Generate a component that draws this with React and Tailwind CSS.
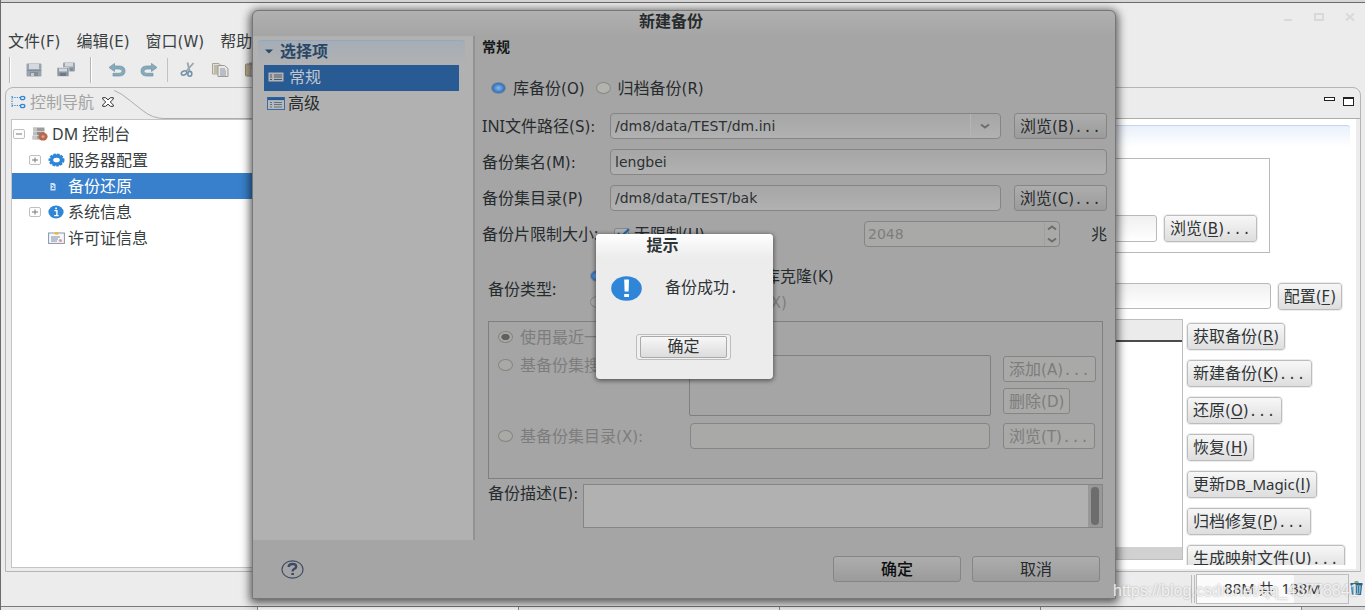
import React from "react";

const FONT = "font-['Noto_Sans','Noto_Sans_CJK_SC',sans-serif]";

function Dots() {
  return <span className="font-['Liberation_Mono',monospace] text-[15px] leading-none">...</span>;
}

function Key({ k, mark, tail }) {
  return (
    <span className="font-['DejaVu_Sans',sans-serif] text-[15px] leading-none">
      ({mark ? <u className="underline underline-offset-2">{k}</u> : k}){tail}
    </span>
  );
}

/* ---------- icons ---------- */

function SaveIcon() {
  return (
    <svg width="16" height="14" viewBox="0 0 16 14">
      <rect x="0.5" y="0.5" width="15" height="13" rx="1" fill="#9aa4ae" />
      <rect x="3" y="1" width="10" height="5" fill="#d3d9de" />
      <rect x="1" y="7" width="14" height="1" fill="#7f8b96" />
      <rect x="4" y="9" width="8" height="4" fill="#848e98" />
      <rect x="5" y="10" width="3" height="3" fill="#c6ccd2" />
    </svg>
  );
}

function SaveAllIcon() {
  return (
    <svg width="18" height="15" viewBox="0 0 18 15">
      <rect x="6" y="0.5" width="12" height="9" rx="1" fill="#9aa4ae" />
      <rect x="8" y="1" width="8" height="3.5" fill="#d3d9de" />
      <rect x="10" y="6" width="6" height="3" fill="#848e98" />
      <rect x="0" y="5.5" width="12" height="9" rx="1" fill="#8b97a2" stroke="#ececec" strokeWidth="0.6" />
      <rect x="2" y="6.5" width="8" height="3" fill="#d3d9de" />
      <rect x="3" y="11" width="6" height="3" fill="#6f7a85" />
    </svg>
  );
}

function UndoIcon({ flip }) {
  return (
    <svg width="18" height="14" viewBox="0 0 18 14" className={flip ? "-scale-x-100" : ""}>
      <path d="M6.5 0.5 L1 4.5 L6.5 8.5 V6 H11 Q14 6 14 8.2 Q14 10.3 11 10.3 H5 V13 H11.5 Q17 12.8 17 8 Q17 3.2 11.5 3 H6.5 Z" fill="#87aabb" stroke="#6b93a8" strokeWidth="0.7" />
    </svg>
  );
}

function CutIcon() {
  return (
    <svg width="16" height="15" viewBox="0 0 16 15" fill="none">
      <path d="M13.5 1 L6 9.5 M7.5 0.5 L9.5 9" stroke="#9aa6af" strokeWidth="1.8" />
      <ellipse cx="4" cy="11" rx="2.8" ry="2" stroke="#7593a8" strokeWidth="1.6" transform="rotate(-25 4 11)" />
      <ellipse cx="9.8" cy="11.8" rx="2" ry="2.4" stroke="#7593a8" strokeWidth="1.6" />
    </svg>
  );
}

function CopyIcon() {
  return (
    <svg width="17" height="14" viewBox="0 0 17 14">
      <path d="M0.5 0.5 H7 L9 2.5 V11 H0.5 Z" fill="#e2dfd2" stroke="#a8a48f" />
      <path d="M2 3 H6 M2 5 H6 M2 7 H6 M2 9 H6" stroke="#9a9788" />
      <path d="M6 2.5 H12.5 L16 5.5 V13.5 H6 Z" fill="#e6e8ea" stroke="#9b9b8e" />
      <path d="M8 6 H13 M8 8 H14 M8 10 H14 M8 12 H14" stroke="#8b94a2" />
    </svg>
  );
}

function PasteIcon() {
  return (
    <svg width="16" height="15" viewBox="0 0 16 15">
      <rect x="0.5" y="2" width="13" height="12" rx="1" fill="#b9ab90" stroke="#938770" />
      <rect x="4" y="0.5" width="6" height="3" fill="#8d99a5" />
      <rect x="6" y="6" width="9" height="8" fill="#eceef0" stroke="#8b94a2" />
    </svg>
  );
}

function NavIcon() {
  return (
    <svg width="15" height="14" viewBox="0 0 15 14" fill="none">
      <path d="M1 1 V12 M1 2.5 H9 M1 10.5 H9" stroke="#2f86d6" strokeWidth="1.2" strokeDasharray="1.2 1.2" />
      <ellipse cx="11.6" cy="3" rx="2.2" ry="1.7" stroke="#2f86d6" strokeWidth="1.3" />
      <ellipse cx="11.6" cy="11" rx="2.2" ry="1.7" stroke="#2f86d6" strokeWidth="1.3" />
    </svg>
  );
}

function CloseTabIcon() {
  return (
    <svg width="12" height="10" viewBox="0 0 12 10" fill="#fff" stroke="#333" strokeWidth="1">
      <path d="M0.7 0.7 H3.5 L6 2.8 L8.5 0.7 H11.3 V2 L8.3 5 L11.3 8 V9.3 H8.5 L6 7.2 L3.5 9.3 H0.7 V8 L3.7 5 L0.7 2 Z" />
    </svg>
  );
}

function Expander({ open }) {
  return (
    <svg width="12" height="10" viewBox="0 0 12 10" fill="none">
      <rect x="0.5" y="0.5" width="11" height="9" rx="1.5" fill="#fdfdfd" stroke="#bfbfbf" />
      <path d={open ? "M3 5 H9" : "M3 5 H9 M6 2.5 V7.5"} stroke="#777" />
    </svg>
  );
}

function ServerIcon() {
  return (
    <svg width="16" height="14" viewBox="0 0 16 14">
      <path d="M1 0.5 H12.5 V4 H1 Z" fill="#9d9d9d" />
      <path d="M1 4.6 H12.5 V8 H1 Z" fill="#8b8b8b" />
      <path d="M0.5 8.6 H12 V12.5 H0.5 Z" fill="#a5a5a5" />
      <path d="M1 0.5 H5 V12.5 H1 Z" fill="#d4d4d4" opacity="0.7" />
      <ellipse cx="11" cy="9.6" rx="4.6" ry="4" fill="#b9674d" />
      <ellipse cx="11" cy="9.6" rx="1.6" ry="1.3" fill="#dca28f" />
    </svg>
  );
}

function GearIcon() {
  return (
    <svg width="17" height="14" viewBox="0 0 17 14" fill="none">
      <ellipse cx="8.5" cy="7" rx="7.1" ry="5.7" stroke="#2f86d6" strokeWidth="1.8" strokeDasharray="2.6 1.2" />
      <ellipse cx="8.5" cy="7" rx="5" ry="4" stroke="#2f86d6" strokeWidth="3.4" />
    </svg>
  );
}

function BackupIcon() {
  return (
    <svg width="16" height="12" viewBox="0 0 16 12" fill="none">
      <path d="M9 1 Q14 2 14 6 Q14 9 11 11" stroke="#2b7fd3" strokeWidth="1.2" />
      <path d="M2.5 3 H6 L7.5 4.5 V10.5 H2.5 Z" fill="#cfe3f7" />
      <path d="M3.5 5 L6 6.5 L4 8.5 H6.5" stroke="#2f78c4" strokeWidth="1" />
    </svg>
  );
}

function InfoIcon() {
  return (
    <svg width="16" height="14" viewBox="0 0 16 14">
      <ellipse cx="8" cy="7" rx="7.6" ry="6.4" fill="#2f86d6" />
      <path d="M6.4 5.6 H8.9 V10.5 M6.2 10.6 H10.6" stroke="#fff" strokeWidth="1.4" fill="none" />
      <rect x="7.2" y="2.6" width="1.8" height="1.6" fill="#fff" />
    </svg>
  );
}

function LicenseIcon() {
  return (
    <svg width="17" height="12" viewBox="0 0 17 12">
      <rect x="0.6" y="1" width="15.8" height="10.4" fill="#f6f8fb" stroke="#8794a8" />
      <path d="M3 5 H12 M3 7 H10 M3 9 H9" stroke="#7d8aa5" />
      <rect x="7" y="0" width="3.4" height="2.6" fill="#f2b632" />
      <ellipse cx="12.4" cy="8.6" rx="1.8" ry="1.5" fill="#e39aa0" />
    </svg>
  );
}

function PageIcon({ selected }) {
  return selected ? (
    <svg width="16" height="10" viewBox="0 0 16 10">
      <rect x="0.5" y="0.5" width="15" height="9" fill="#b3b3b3" />
      <path d="M2 3 H4 M2 5 H4 M2 7.5 H4 M6 3 H14 M6 5 H14 M6 7.5 H14" stroke="#4c5a68" />
    </svg>
  ) : (
    <svg width="18" height="13" viewBox="0 0 18 13">
      <rect x="0.5" y="0.5" width="17" height="12" fill="#b4b9be" stroke="#3d6c9e" />
      <rect x="1" y="0.5" width="16" height="2.6" fill="#21599a" />
      <path d="M3 5.5 H5 M3 7.5 H5 M3 10 H5 M7 5.5 H15 M7 7.5 H15 M7 10 H15" stroke="#65707c" />
    </svg>
  );
}

function Chevron({ up }) {
  return (
    <svg width="10" height="6" viewBox="0 0 10 6" fill="none" stroke="#6c6e6d" strokeWidth="2">
      <path d={up ? "M1 4.5 L5 1.5 L9 4.5" : "M1 1.5 L5 4.5 L9 1.5"} />
    </svg>
  );
}

function HelpIcon() {
  return (
    <svg width="23" height="19" viewBox="0 0 23 19" fill="none" stroke="#3d4a61">
      <ellipse cx="11.5" cy="9.5" rx="10.5" ry="8.6" strokeWidth="1.1" />
      <path d="M7.6 7 Q7.8 4 11.5 4 Q15.2 4 15.2 6.6 Q15.2 8.3 12.8 9.2 Q11.6 9.7 11.6 11.4" strokeWidth="2.3" />
      <path d="M10.3 14 H13" strokeWidth="2" />
    </svg>
  );
}

function TrashIcon() {
  return (
    <svg width="13" height="14" viewBox="0 0 13 14" fill="none">
      <path d="M1.5 4 H11.5 L10.5 13.3 H2.5 Z" fill="#8fc0cf" stroke="#2d6d9c" strokeWidth="1.2" />
      <path d="M4.4 5 V12 M6.5 5 V12 M8.6 5 V12" stroke="#2d6d9c" />
      <path d="M0.5 3 H12.5" stroke="#2d5f86" strokeWidth="2" />
      <path d="M4.5 1.5 Q6.5 0 8.5 1.5" stroke="#5a9c62" strokeWidth="1.4" />
    </svg>
  );
}

/* ---------- main window ---------- */

function TreeRow({ pad, expander, icon, label, selected }) {
  return (
    <li className={"flex h-[26px] items-center " + pad + (selected ? " bg-[#3880cc] text-white" : " text-[#3a3f42]")}>
      <span className="flex w-[12px] shrink-0 justify-center">{expander}</span>
      <span className="ml-[6px] flex w-[18px] shrink-0 justify-center">{icon}</span>
      <span className="ml-[3px] whitespace-nowrap">{label}</span>
    </li>
  );
}

function LightButton({ children }) {
  return (
    <button className="h-[27px] shrink-0 rounded-[3px] border border-[#bdbdbd] bg-gradient-to-b from-[#f7f7f7] to-[#dedede] px-[5px] leading-[23px] whitespace-nowrap text-[#2f3436] outline-1 outline-[#ececec]">
      {children}
    </button>
  );
}

const ACTIONS = [
  { t: "获取备份", k: "R" },
  { t: "新建备份", k: "K", more: true },
  { t: "还原", k: "O", more: true },
  { t: "恢复", k: "H" },
  { t: "更新", latin: "DB_Magic", k: "I" },
  { t: "归档修复", k: "P", more: true },
  { t: "生成映射文件", k: "U", more: true },
];

function Sep() {
  return <span className="h-[26px] w-[2px] shrink-0 border-r border-white bg-[#b5b5b5]" />;
}

function MainWindow() {
  return (
    <div className="flex min-h-screen flex-col border-l border-[#6b6b6b] bg-[#ececec]">
      <div className="h-[3px] border-b border-[#6b6b6b] bg-[#d6d6d6]" />
      <header className="flex h-[27px] items-center justify-end gap-[21px] pr-[10px] text-[#d9d9d9]">
        <button aria-label="最小化" className="flex h-[9px] w-[9px] items-end"><span className="h-[2px] w-[8px] bg-current" /></button>
        <button aria-label="最大化" className="h-[8px] w-[10px] border-2 border-current" />
        <button aria-label="关闭">
          <svg width="10" height="8" viewBox="0 0 10 8" stroke="currentColor" strokeWidth="2"><path d="M1 0.5 L9 7.5 M9 0.5 L1 7.5" /></svg>
        </button>
      </header>
      <nav className="flex h-[22px] items-center gap-[16px] pl-[7px] whitespace-nowrap text-[#3a3f42]">
        <a href="#file">文件<Key k="F" /></a>
        <a href="#edit">编辑<Key k="E" /></a>
        <a href="#window">窗口<Key k="W" /></a>
        <a href="#help">帮助<Key k="H" /></a>
      </nav>
      <div className="flex h-[35px] items-center pl-[8px]">
        <Sep />
        <div className="flex items-center gap-[15px] px-[15px]">
          <button aria-label="保存"><SaveIcon /></button>
          <button aria-label="全部保存"><SaveAllIcon /></button>
        </div>
        <Sep />
        <div className="flex items-center gap-[14px] pr-[9px] pl-[16px]">
          <button aria-label="撤销"><UndoIcon /></button>
          <button aria-label="重做"><UndoIcon flip /></button>
        </div>
        <span className="h-[24px] w-px bg-[#c2c2c2]" />
        <div className="flex items-center gap-[16px] pl-[12px]">
          <button aria-label="剪切"><CutIcon /></button>
          <button aria-label="复制"><CopyIcon /></button>
          <button aria-label="粘贴"><PasteIcon /></button>
        </div>
      </div>

      <main className="flex min-h-[485px] flex-1 gap-[6px] pr-[4px] pl-[4px]">
        <aside className="flex w-[340px] shrink-0 flex-col rounded-tl-[8px] border border-[#b5b5b5]">
          <div className="flex h-[31px] items-start">
            <div className="flex h-[28px] items-center gap-[4px] pl-[5px] text-[#a3a3a3]">
              <NavIcon />
              <span className="text-[16px]">控制导航</span>
              <button aria-label="关闭标签" className="ml-[4px]"><CloseTabIcon /></button>
            </div>
            <svg className="h-[31px] flex-1" viewBox="0 0 230 31" preserveAspectRatio="xMinYMin slice" fill="none">
              <path d="M-12 0.5 Q2 0.5 14 11 L28 22 Q38 30.5 50 30.5 H240" stroke="#adadad" />
            </svg>
          </div>
          <ul className="mx-[5px] mb-[3px] flex-1 border border-[#c4c4c4] bg-white pt-[1px]">
            <TreeRow pad="pl-[1px]" expander={<Expander open />} icon={<ServerIcon />} label="DM 控制台" />
            <TreeRow pad="pl-[17px]" expander={<Expander />} icon={<GearIcon />} label="服务器配置" />
            <TreeRow pad="pl-[17px]" icon={<BackupIcon />} label="备份还原" selected />
            <TreeRow pad="pl-[17px]" expander={<Expander />} icon={<InfoIcon />} label="系统信息" />
            <TreeRow pad="pl-[17px]" icon={<LicenseIcon />} label="许可证信息" />
          </ul>
        </aside>

        <section className="flex min-w-0 flex-1 flex-col rounded-t-[8px] border border-[#b5b5b5]">
          <div className="flex h-[31px] items-center justify-end gap-[8px] border-b border-[#adadad] pr-[6px] pb-[4px]">
            <button aria-label="最小化视图" className="mb-[5px] h-[4px] w-[11px] border border-[#222] bg-white" />
            <button aria-label="最大化视图" className="h-[9px] w-[11px] border border-t-2 border-[#222] bg-white" />
          </div>
          <div className="mr-[4px] mb-[2px] flex flex-1 flex-col bg-white pt-[6px] pb-[4px] pl-[6px]">
            <div className="mr-[6px] h-[22px] rounded-t-[3px] border-t border-[#c5d6ea] bg-gradient-to-b from-[#eaf1fb] to-white" />
            <div className="mt-[11px] mr-[86px] flex h-[95px] items-end gap-[7px] border border-[#b9b9b9] pr-[12px] pb-[10px]">
              <input aria-label="路径" className="h-[27px] min-w-0 flex-1 rounded-[3px] border border-[#b9b9b9] bg-gradient-to-b from-[#f0f0f0] to-white px-1" />
              <LightButton>浏览<Key k="B" mark /><Dots /></LightButton>
            </div>
            <div className="mt-[30px] mr-[14px] flex gap-[7px]">
              <input aria-label="配置" className="h-[26px] min-w-0 flex-1 rounded-[3px] border border-[#b9b9b9] bg-gradient-to-b from-[#f0f0f0] to-white px-1" />
              <LightButton>配置<Key k="F" mark /></LightButton>
            </div>
            <div className="mt-[9px] flex h-[246px] overflow-hidden">
              <div className="flex h-[241px] flex-1 flex-col border border-[#bdbdbd]">
                <div className="h-[22px] border-b-2 border-[#4b4b4b] bg-[#ebebeb]" />
                <div className="flex-1" />
                <div className="h-[12px] bg-[#d1d1d1]" />
              </div>
              <div className="flex w-[173px] shrink-0 flex-col items-start gap-[10px] pt-[4px] pl-[4px]">
                {ACTIONS.map((a) => (
                  <LightButton key={a.t}>
                    {a.t}
                    {a.latin && <span className="text-[15px] leading-none">{a.latin}</span>}
                    <Key k={a.k} mark />
                    {a.more && <Dots />}
                  </LightButton>
                ))}
              </div>
            </div>
          </div>
        </section>
      </main>

      <footer className="flex h-[34px] items-start justify-end pt-[2px]">
        <span className="mt-[1px] h-[28px] w-[4px] border-x border-[#bcbcbc]" />
        <div className="ml-[1px] flex h-[30px] w-[153px] items-center justify-center border border-[#bdbdbd] bg-linear-to-r from-[#fbfbfb] from-64% to-[#ececec] to-64% pb-[2px] text-[15px] text-[#333]">
          88M 共 &nbsp;138M
        </div>
        <button aria-label="回收" className="mt-[7px] ml-px mr-[2px]"><TrashIcon /></button>
      </footer>
      <div className="grid h-[4px] grid-cols-[257px_261px_261px_261px_261px_1fr] border-t border-[#7a7a7a]">
        <span className="border-r border-[#888] bg-[#e6e6e6]" />
        <span className="border-r border-[#888] bg-[#fafafa]" />
        <span className="border-r border-[#888] bg-[#ececec]" />
        <span className="border-r border-[#888] bg-[#ececec]" />
        <span className="border-r border-[#888] bg-[#ececec]" />
        <span className="bg-[#d8d8d8]" />
      </div>
    </div>
  );
}

/* ---------- new-backup dialog ---------- */

const FIELD = "h-[26px] min-w-0 rounded-[4px] border border-[#858585] bg-gradient-to-b from-[#a6a6a6] to-[#b1b1b1] px-[4px] font-['DejaVu_Sans',sans-serif] text-[14px] text-[#2c3133]";
const RADIO = "h-[12px] w-[15px] shrink-0 appearance-none rounded-[50%] border border-[#878780] bg-[#b2b2af] checked:bg-radial checked:from-[#7db0e6] checked:from-10% checked:to-[#2c6cb4] checked:to-70% checked:border-[#7f8a96] disabled:border-[#85857f] disabled:bg-[#a9a9a6] disabled:checked:from-[#5f6060] disabled:checked:from-40% disabled:checked:to-[#a9a9a6] disabled:checked:to-50%";

function Radio({ name, label, k, tail, checked, disabled }) {
  return (
    <label className={"flex h-[26px] items-center whitespace-nowrap " + (disabled ? "text-[#7d7d7d]" : "")}>
      <input type="radio" name={name} defaultChecked={checked} disabled={disabled} className={RADIO + " mr-[7px]"} />
      <span>{label}{k && <Key k={k} tail={tail} />}</span>
    </label>
  );
}

function DimButton({ children, disabled, wide }) {
  return (
    <button
      disabled={disabled}
      className={"h-[26px] shrink-0 rounded-[3px] border border-[#858585] px-[5px] leading-[23px] whitespace-nowrap " + (wide ? "w-[128px] " : "") + (disabled ? "bg-[#a9a9a7] text-[#7d7d7d]" : "bg-gradient-to-b from-[#adadad] to-[#9b9b9b]")}
    >
      {children}
    </button>
  );
}

function Row({ id, label, k, tail, children }) {
  return (
    <div className="flex h-[36px] items-center">
      <label htmlFor={id} className="w-[128px] shrink-0 whitespace-nowrap">{label}{k && <Key k={k} tail={tail} />}</label>
      {children}
    </div>
  );
}

function BackupDialog() {
  return (
    <div role="dialog" aria-label="新建备份" className="absolute top-[10px] left-[252px] flex w-[864px] flex-col rounded-t-[6px] border border-[#777] bg-[#a5a5a5] text-[#262b2d] shadow-[0_2px_10px_2px_rgba(0,0,0,0.65)]">
      <h1 className="h-[25px] rounded-t-[6px] bg-gradient-to-b from-[#b0b0b0] to-[#a5a5a5] pr-[26px] text-center text-[16px] leading-[21px] font-bold">新建备份</h1>
      <div className="flex h-[504px]">
        <aside className="w-[222px] shrink-0 border-r-2 border-[#929292] bg-[#b1b1b1] pt-[4px] pr-[8px] pl-[5px]">
          <div className="flex h-[25px] items-center gap-[7px] rounded-t-[4px] border-t border-[#94a7bd] bg-gradient-to-b from-[#a5adb7] to-[#b1b1b1] pb-[4px] pl-[7px] font-bold text-[#2b4766]">
            <svg width="8" height="5" viewBox="0 0 8 5"><path d="M0 0.5 H8 L4 4.5 Z" fill="#2b4766" /></svg>
            选择项
          </div>
          <ul className="mr-[6px] ml-[6px]">
            <li className="flex h-[26px] items-center gap-[5px] bg-[#285b94] pb-[2px] pl-[4px] text-[#c0c6cc]"><PageIcon selected />常规</li>
            <li className="flex h-[26px] items-center gap-[3px] pb-[2px] pl-[3px]"><PageIcon />高级</li>
          </ul>
        </aside>
        <div className="min-w-0 flex-1 pr-[8px] pl-[7px]">
          <h2 className="h-[24px] text-[14px] leading-[21px] font-bold text-[#15191a]">常规</h2>
          <div className="mt-[15px] ml-[9px] flex gap-[11px]">
            <Radio name="kind" label="库备份" k="O" checked />
            <Radio name="kind" label="归档备份" k="R" />
          </div>
          <div className="mt-[7px]">
            <Row id="ini" label="INI文件路径" k="S" tail=":">
              <div className="relative flex min-w-0 flex-1">
                <select id="ini" className={FIELD + " w-full appearance-none"}>
                  <option>/dm8/data/TEST/dm.ini</option>
                </select>
                <span className="pointer-events-none absolute top-[1px] right-[1px] flex h-[24px] w-[30px] items-center justify-center border-l border-[#b4b4b4]"><Chevron /></span>
              </div>
              <span className="w-[13px]" />
              <DimButton>浏览<Key k="B" /><Dots /></DimButton>
            </Row>
            <Row id="setname" label="备份集名" k="M" tail=":">
              <input id="setname" defaultValue="lengbei" className={FIELD + " flex-1"} />
            </Row>
            <Row id="dir" label="备份集目录" k="P">
              <input id="dir" defaultValue="/dm8/data/TEST/bak" className={FIELD + " flex-1"} />
              <span className="w-[13px]" />
              <DimButton>浏览<Key k="C" /><Dots /></DimButton>
            </Row>
            <Row id="size" label="备份片限制大小:">
              <label className="flex flex-1 items-center gap-[5px] pl-[4px]">
                <span className="relative flex">
                  <input type="checkbox" defaultChecked className="h-[12px] w-[15px] appearance-none rounded-[2px] border border-[#7f8a8a] bg-[#b0b0b0]" />
                  <svg className="pointer-events-none absolute top-0 left-[2px]" width="14" height="12" viewBox="0 0 14 12" fill="none"><path d="M2 5 L5 9 L13 1" stroke="#2d68a8" strokeWidth="2.4" /></svg>
                </span>
                <span>无限制<Key k="U" /></span>
              </label>
              <div className="flex h-[26px] w-[196px] rounded-[4px] border border-[#858585] bg-[#a9a9a7]">
                <input id="size" disabled defaultValue="2048" className="min-w-0 flex-1 pl-[3px] font-['DejaVu_Sans',sans-serif] text-[14px] text-[#7d7d7d]" />
                <span className="flex w-[15px] flex-col items-center justify-around border-l border-[#a0a09e]"><Chevron up /><Chevron /></span>
              </div>
              <span className="w-[47px] text-right">兆</span>
            </Row>
          </div>
          <div className="mt-[11px] ml-[6px]">
            <div className="flex items-center">
              <span className="w-[102px]">备份类型:</span>
              <div className="w-[300px]">
                <div className="flex gap-[46px]">
                  <Radio name="type" label="完全备份" k="L" checked />
                  <Radio name="type" label="库克隆" k="K" />
                </div>
                <div className="flex gap-[14px]">
                  <Radio name="type" label="增量备份" k="T" disabled />
                  <Radio name="type" label="累积" k="X" disabled />
                </div>
              </div>
            </div>
            <fieldset className="mt-[6px] mr-[4px] h-[158px] border border-[#7f7f7f] pt-[2px] pl-[9px]">
              <Radio name="base" label="使用最近一次备份集" checked disabled />
              <div className="mt-[2px] flex">
                <div className="w-[191px] shrink-0"><Radio name="base" label="基备份集搜索目录:" disabled /></div>
                <div className="mt-[3px] h-[61px] w-[302px] rounded-[2px] border border-[#7f7f7f]" />
                <div className="mt-[4px] ml-[12px] flex flex-col items-start gap-[6px]">
                  <DimButton disabled>添加<Key k="A" /><Dots /></DimButton>
                  <DimButton disabled>删除<Key k="D" /></DimButton>
                </div>
              </div>
              <div className="mt-[7px] flex">
                <div className="w-[192px] shrink-0"><Radio name="base" label="基备份集目录" k="X" tail=":" disabled /></div>
                <input aria-label="基备份集目录" disabled className="h-[26px] w-[300px] rounded-[4px] border border-[#858585] bg-[#a9a9a7]" />
                <span className="w-[13px]" />
                <DimButton disabled>浏览<Key k="T" /><Dots /></DimButton>
              </div>
            </fieldset>
            <div className="mt-[5px] mr-[4px] flex">
              <label htmlFor="desc" className="w-[95px] shrink-0 leading-[18px] whitespace-nowrap">备份描述<Key k="E" tail=":" /></label>
              <div className="flex flex-1 border border-[#858585] bg-[#b1b1b1]">
                <textarea id="desc" className="h-[42px] flex-1 resize-none" />
                <span className="flex w-[14px] justify-center bg-[#989898] py-[2px]"><span className="w-[8px] rounded-full bg-[#6d6d6d]" /></span>
              </div>
            </div>
          </div>
        </div>
      </div>
      <div className="flex h-[58px] items-center gap-[11px] pr-[15px] pl-[28px]">
        <button aria-label="帮助"><HelpIcon /></button>
        <span className="flex-1" />
        <DimButton wide><span className="font-medium text-[#0c0f10]">确定</span></DimButton>
        <DimButton wide>取消</DimButton>
      </div>
    </div>
  );
}

function Alert() {
  return (
    <div role="alertdialog" aria-label="提示" className="absolute top-[234px] left-[596px] w-[177px] rounded-[4px] bg-[#ececec] pb-[19px] text-[#2f3436] shadow-[0_1px_4px_1px_rgba(0,0,0,0.45)]">
      <h2 className="h-[24px] rounded-t-[4px] bg-gradient-to-b from-white to-[#ececec] pr-[44px] text-center text-[16px] leading-[22px] font-bold">提示</h2>
      <div className="flex h-[60px] items-center gap-[23px] pl-[15px]">
        <svg width="31" height="25" viewBox="0 0 31 25">
          <ellipse cx="15.5" cy="12.5" rx="15.3" ry="12.2" fill="#2f86d8" />
          <path d="M13.2 3.5 H18 L17.6 15.5 H13.6 Z M13.2 18 H18 V21 H13.2 Z" fill="#fff" />
        </svg>
        <span className="whitespace-nowrap">备份成功<span className="font-['Liberation_Mono',monospace]">.</span></span>
      </div>
      <div className="mt-[16px] ml-[40px] w-[95px] rounded-[3px] border border-[#bdbdbd] bg-[#f1f1f1] px-[3px] py-px">
        <button className="block h-[22px] w-full rounded-[2px] border border-[#aaa] bg-gradient-to-b from-[#f7f7f7] to-[#dcdcdc] pb-[2px] leading-[18px]">确定</button>
      </div>
    </div>
  );
}

export default function App() {
  return (
    <div className={"relative min-h-screen overflow-hidden text-[16px] leading-[24px] " + FONT}>
      <MainWindow />
      <BackupDialog />
      <Alert />
      <span className="pointer-events-none absolute right-0 bottom-[7px] w-[252px] overflow-hidden font-['Liberation_Sans',sans-serif] text-[16px] whitespace-nowrap text-white/80 [text-shadow:0_0_2px_#999]">
        https://blog.csdn.net/qq_43778341
      </span>
    </div>
  );
}
